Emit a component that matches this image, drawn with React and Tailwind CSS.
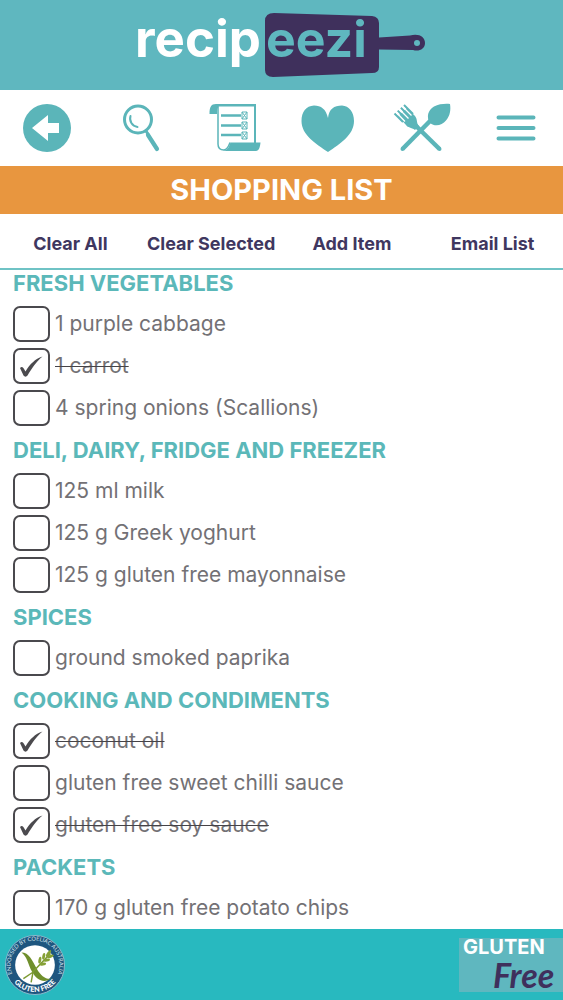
import { useState } from "react";

const SECTIONS = [
  {
    title: "FRESH VEGETABLES",
    items: [
      { name: "1 purple cabbage" },
      { name: "1 carrot", done: true },
      { name: "4 spring onions (Scallions)" },
    ],
  },
  {
    title: "DELI, DAIRY, FRIDGE AND FREEZER",
    items: [
      { name: "125 ml milk" },
      { name: "125 g Greek yoghurt" },
      { name: "125 g gluten free mayonnaise" },
    ],
  },
  { title: "SPICES", items: [{ name: "ground smoked paprika" }] },
  {
    title: "COOKING AND CONDIMENTS",
    items: [
      { name: "coconut oil", done: true },
      { name: "gluten free sweet chilli sauce" },
      { name: "gluten free soy sauce", done: true },
    ],
  },
  { title: "PACKETS", items: [{ name: "170 g gluten free potato chips" }] },
];

const ACTIONS = ["Clear All", "Clear Selected", "Add Item", "Email List"];

function Logo() {
  return (
    <svg viewBox="0 0 300 70" className="h-[70px] w-[300px]" role="img" aria-label="recipeezi">
      <path
        d="M142 3 L240 6 Q247 7 247 13 V27.500 L278 25.500 C287 23 293 27 293 33 C293 39 287 42 281 40 L247 39.500 V57 Q247 63 240 63 L141 67 Q133 67 133 60 V11 Q133 3 142 3 Z"
        fill="#3f305c"
      />
      <circle cx="285" cy="33" r="3" fill="#5fb7bf" />
      <g fontFamily="Inter, sans-serif" fontWeight="700">
        <text x="3" y="47" fontSize="51" fill="#ffffff">recip</text>
        <text x="134" y="47" fontSize="50" fill="#5fb7bf">eezi</text>
      </g>
    </svg>
  );
}

function BackIcon() {
  return (
    <svg viewBox="0 0 50 50" className="size-[50px]" fill="#5bb5b9">
      <circle cx="25" cy="25" r="24" />
      <path d="M10 25 L26 12 V20 H37 V30 H26 V38 Z" fill="#fff" />
    </svg>
  );
}

function SearchIcon() {
  return (
    <svg viewBox="0 0 50 50" className="size-[50px]" fill="none" stroke="#5bb5b9" strokeLinecap="round">
      <circle cx="22" cy="16.500" r="13.500" strokeWidth="3" />
      <path d="M14.500 13 C13 18 16 23 21.500 24" strokeWidth="2" />
      <path d="M30 28 L32 31" strokeWidth="3" />
      <path d="M32 32 L41 46" strokeWidth="4.200" />
    </svg>
  );
}

function ListIcon() {
  return (
    <svg viewBox="0 0 52 50" className="h-[50px] w-[52px]" fill="none" stroke="#5bb5b9">
      <path d="M.5 11 C.5 4 2 1 7 1 H47 V3.500 H10 C8 5 8 7 8 11 Z" fill="#5bb5b9" stroke="none" />
      <path d="M9 4 V41 C9 45 11 47 15 47 C19 46 20 42 21 39.500" strokeWidth="1.500" />
      <path d="M46 2 V40" strokeWidth="2" />
      <path d="M21.500 39.500 H51.500 C51 44 50 48 47 48 H14 C19 47 20 44 21.500 39.500 Z" fill="#5bb5b9" stroke="none" />
      <path d="M12 12.500 H32 M12 22.500 H32 M12 32 H32" strokeWidth="2.500" />
      <path
        d="M33 9 h5 v7 h-5 z l5 7 m0 -7 l-5 7 M33 19 h5 v7 h-5 z l5 7 m0 -7 l-5 7 M33 29 h5 v7 h-5 z l5 7 m0 -7 l-5 7"
        strokeWidth="1"
      />
    </svg>
  );
}

function HeartIcon() {
  return (
    <svg viewBox="0 0 54 50" className="h-[50px] w-[54px]" fill="#5bb5b9">
      <path d="M27 15 C25 6 20 2.500 13 2.500 C5 3 .5 9 .5 18 C.5 32 15 41 27 49 C39 41 53 32 53 18 C53 9 48 3 41 2.500 C33 2.500 28 6 27 15 Z" />
    </svg>
  );
}

function CutleryIcon() {
  return (
    <svg viewBox="0 0 58 50" className="h-[50px] w-[58px]" fill="#5bb5b9" stroke="#5bb5b9">
      <path d="M9.500 46 L38 17" strokeWidth="4.500" />
      <circle cx="9.500" cy="46" r="2" stroke="none" />
      <path d="M46.500 46 L20 20" strokeWidth="4.500" />
      <circle cx="46.500" cy="46" r="2" stroke="none" />
      <path d="M37 20 C33 14 35 7 41 3.500 C46 1 52 .5 57 1 C58 7 57 13 53 17.500 C49 22.500 42 24 37 20 Z" stroke="none" />
      <path d="M5 13 L13 22 C15 25 18 24 22 27 L26 23 C23 20 25 17 22 13 L14 5 Z" stroke="none" />
      <path d="M1.500 10.500 L10 19 M4.700 7.600 L13 16 M7.900 4.700 L17 14 M11 2 L20 11" strokeWidth="2" />
      <path d="M2.500 8.500 L12 18.500 M5.800 5.700 L15.500 15.500 M9 3 L18.500 12.500" strokeWidth="1.300" stroke="#fff" />
    </svg>
  );
}

function MenuIcon() {
  return (
    <svg viewBox="0 0 40 50" className="h-[50px] w-[40px]" stroke="#5bb5b9" strokeWidth="4" strokeLinecap="round">
      <path d="M2.500 14.500 H37.500 M2.500 25 H37.500 M2.500 35.500 H37.500" />
    </svg>
  );
}

const NAV = [
  ["Back", BackIcon],
  ["Search", SearchIcon],
  ["Shopping list", ListIcon],
  ["Favourites", HeartIcon],
  ["Recipes", CutleryIcon],
  ["Menu", MenuIcon],
];

function CoeliacBadge() {
  return (
    <svg viewBox="0 0 64 64" className="size-[62px]" role="img" aria-label="Endorsed by Coeliac Australia, gluten free">
      <defs>
        <path id="badge-top" d="M9.300 43 A25.200 25.200 0 1 1 54.700 43" />
        <path id="badge-bottom" d="M6 43 A28.500 28.500 0 0 0 58 43" />
      </defs>
      <circle cx="32" cy="32" r="30.500" fill="#1e567f" stroke="#8bb9cc" strokeWidth="1" />
      <circle cx="32" cy="32" r="20.500" fill="#fff" />
      <g fontFamily="Lato, sans-serif" textAnchor="middle">
        <text fontSize="5.800" fill="#d6e6ee">
          <textPath href="#badge-top" startOffset="50%">ENDORSED BY COELIAC AUSTRALIA</textPath>
        </text>
        <text fontSize="7.500" fontWeight="900" fill="#fff">
          <textPath href="#badge-bottom" startOffset="50%">GLUTEN FREE</textPath>
        </text>
      </g>
      <path d="M18 19 C26 19 29 27 34 36 C38 43 43 47 49 46 C41 51 34 48 29 39 C25 32 24 23 18 19 Z" fill="#6f8f2c" />
      <path d="M20 46 L29 40 M28 50 L30 39 M29 40 L48 20" stroke="#7c9a31" strokeWidth="1.500" fill="none" />
      <g fill="#86a136">
        <ellipse cx="37" cy="27" rx="1.500" ry="3.500" transform="rotate(10 37 27)" />
        <ellipse cx="41" cy="23" rx="1.500" ry="3.500" transform="rotate(10 41 23)" />
        <ellipse cx="46" cy="20" rx="1.500" ry="4" transform="rotate(35 46 20)" />
        <ellipse cx="40" cy="31" rx="1.500" ry="3.500" transform="rotate(80 40 31)" />
        <ellipse cx="44" cy="27" rx="1.500" ry="3.500" transform="rotate(80 44 27)" />
        <ellipse cx="48" cy="23" rx="1.500" ry="3.500" transform="rotate(70 48 23)" />
      </g>
    </svg>
  );
}

function Item({ name, done = false }) {
  const [checked, setChecked] = useState(done);
  return (
    <li>
      <label className="flex h-[42px] items-center gap-[5px]">
        <span className="grid h-9 w-[37px] shrink-0">
          <input
            type="checkbox"
            checked={checked}
            onChange={(e) => setChecked(e.target.checked)}
            className="col-start-1 row-start-1 appearance-none rounded-[7px] border-2 border-[#4a494d] bg-white"
          />
          {checked && (
            <svg viewBox="0 0 37 36" className="pointer-events-none col-start-1 row-start-1 h-9 w-[37px]" fill="#4b4a4e">
              <path d="M7 20 C9 18 10 19 12.500 23.500 C17 16 22 11 29.500 8.500 C23 14 19 20 14.500 27.500 C13.500 29 11.500 29 10.500 27.500 Z" />
            </svg>
          )}
        </span>
        <span className={checked ? "text-[#737175] line-through decoration-[#454347] decoration-1" : "text-[#737175]"}>
          {name}
        </span>
      </label>
    </li>
  );
}

export default function App() {
  return (
    <div className="flex min-h-screen flex-col bg-white font-['Inter',sans-serif]">
      <header className="flex h-[90px] items-start justify-center bg-[#5fb7bf] pt-[10px]">
        <Logo />
      </header>
      <nav className="grid h-[76px] grid-cols-6">
        {NAV.map(([label, Icon]) => (
          <button key={label} type="button" aria-label={label} className="flex items-center justify-center">
            <Icon />
          </button>
        ))}
      </nav>
      <h1 className="flex h-12 items-center justify-center bg-[#e8963f] text-[29px] font-bold text-white">SHOPPING LIST</h1>
      <div className="grid h-14 grid-cols-4 border-b-2 border-[#6fc3c5] pt-1">
        {ACTIONS.map((label) => (
          <button key={label} type="button" className="text-[18px] font-bold whitespace-nowrap text-[#3f375f]">
            {label}
          </button>
        ))}
      </div>
      <main className="flex flex-1 flex-col gap-2 px-[13px] text-[21px]">
        {SECTIONS.map((section) => (
          <section key={section.title} className="flex flex-col gap-[6px]">
            <h2 className="flex h-[27px] items-center text-[22px] font-bold text-[#5bb8b9]">{section.title}</h2>
            <ul>
              {section.items.map((item) => (
                <Item key={item.name} {...item} />
              ))}
            </ul>
          </section>
        ))}
      </main>
      <footer className="flex h-[71px] items-center justify-between bg-[#28b9bf] pl-1">
        <CoeliacBadge />
        <div className="flex h-[54px] w-[104px] flex-col bg-[#5fb7bf] pl-1">
          <span className="h-[19px] text-[20px] leading-[19px] font-bold text-white">GLUTEN</span>
          <span className="h-[35px] pl-[30px] font-['Lato',sans-serif] text-[34px] leading-[35px] font-bold text-[#3f305c] italic">
            Free
          </span>
        </div>
      </footer>
    </div>
  );
}
